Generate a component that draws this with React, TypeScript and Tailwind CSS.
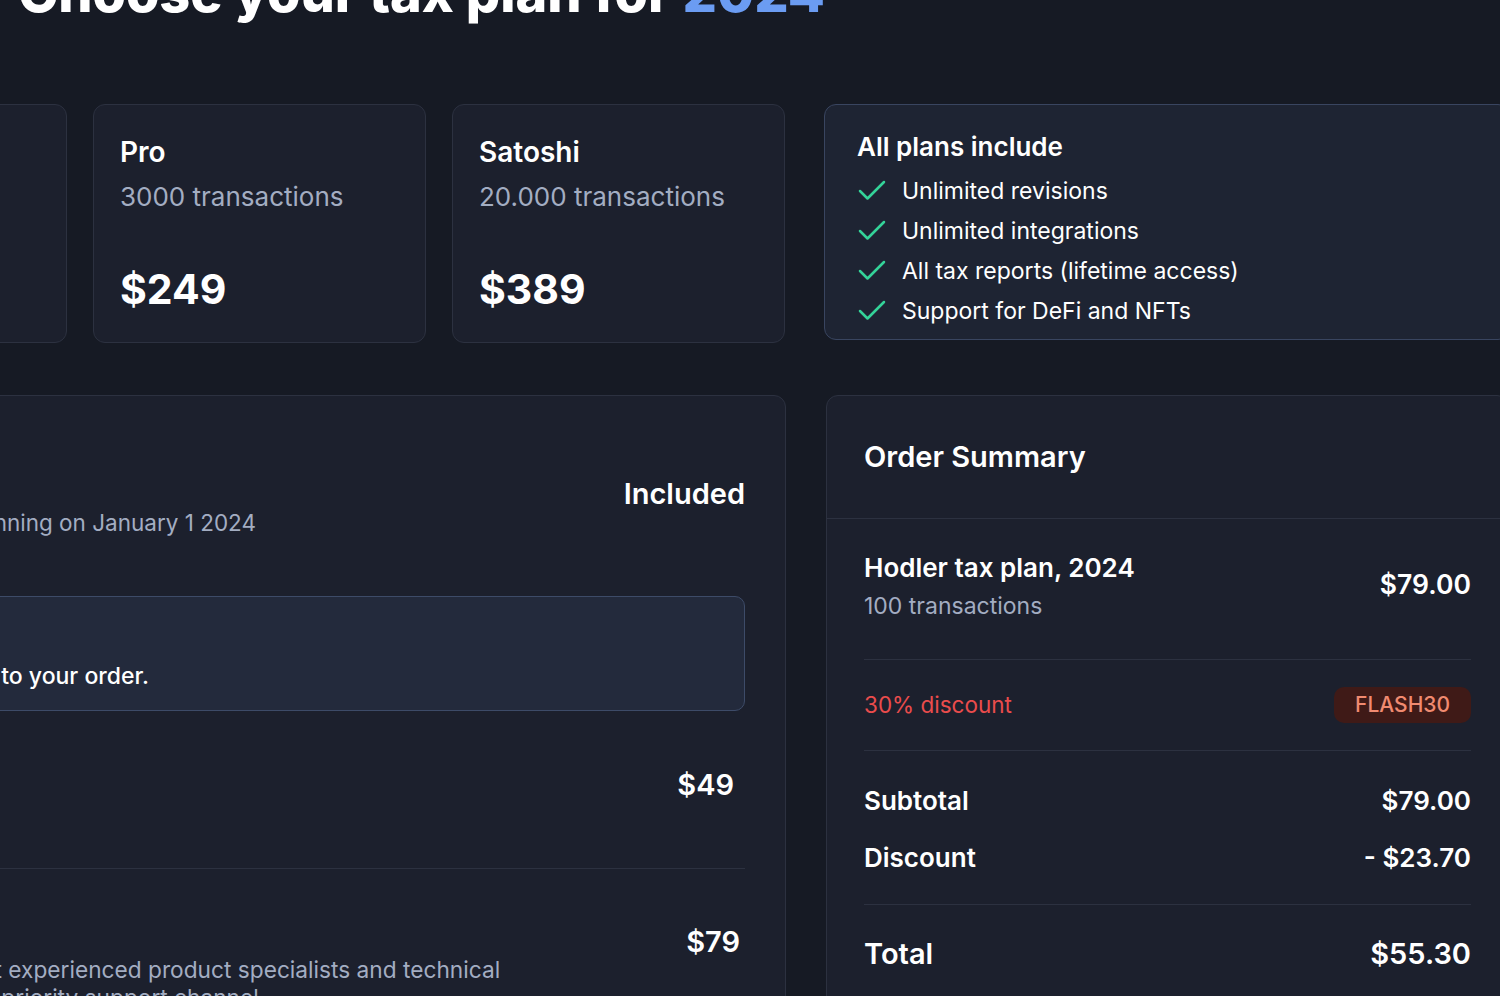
import { Check } from "lucide-react";

type Plan = { name: string; limit: string; price: string };

const plans: Plan[] = [
  { name: "Hodler", limit: "100 transactions", price: "$79" },
  { name: "Pro", limit: "3000 transactions", price: "$249" },
  { name: "Satoshi", limit: "20.000 transactions", price: "$389" },
];

const features = [
  "Unlimited revisions",
  "Unlimited integrations",
  "All tax reports (lifetime access)",
  "Support for DeFi and NFTs",
];

function PlanCard({ plan }: { plan: Plan }) {
  return (
    <div className="flex h-[239px] flex-col rounded-xl border border-[#2c3140] bg-[#1c202d] px-[26px] pt-[30px]">
      <h3 className="text-[28px] leading-[34px] font-semibold text-white">{plan.name}</h3>
      <p className="mt-[12px] text-[26px] leading-[32px] text-[#a3adc2]">{plan.limit}</p>
      <p className="mt-[51px] text-[41px] leading-[50px] font-bold text-white">{plan.price}</p>
    </div>
  );
}

function SummaryRow({ label, value, big }: { label: string; value: string; big?: boolean }) {
  const cls = big
    ? "text-[29px] leading-[36px] font-semibold text-white"
    : "text-[26px] leading-[32px] font-semibold text-white";
  return (
    <div className="flex items-center justify-between">
      <span className={cls}>{label}</span>
      <span className={cls}>{value}</span>
    </div>
  );
}

export default function App() {
  return (
    <div className="h-[996px] w-[1500px] overflow-hidden bg-[#161a24] font-['Inter',sans-serif] antialiased">
      <div className="ml-[-266px] w-[1800px]">
        <h1 className="mt-[-34px] pl-[284px] text-[54px] leading-[54px] font-extrabold text-white">
          Choose your tax plan for <span className="text-[#6b9cf2]">2024</span>
        </h1>

        <div className="mt-[84px] flex items-start gap-[39px]">
          <div className="grid w-[1051px] grid-cols-3 gap-[26px]">
            {plans.map((p) => (
              <PlanCard key={p.name} plan={p} />
            ))}
          </div>
          <div className="h-[236px] w-[686px] rounded-xl border border-[#394560] bg-[#1e2433] px-[32px] pt-[26px]">
            <h3 className="text-[26px] leading-[32px] font-semibold text-white">All plans include</h3>
            <ul className="mt-[8px] ml-[-3px] flex flex-col">
              {features.map((f) => (
                <li key={f} className="flex h-[40px] items-center gap-[12px]">
                  <Check className="h-[36px] w-[36px] shrink-0 text-[#34d399]" strokeWidth={1.7} />
                  <span className="text-[23px] text-white">{f}</span>
                </li>
              ))}
            </ul>
          </div>
        </div>

        <div className="mt-[52px] flex items-start gap-[40px]">
          {/* plan details + add-ons */}
          <div className="h-[700px] w-[1052px] rounded-xl border border-[#2c3140] bg-[#1c202d] px-[40px] pt-[80px]">
            <div className="flex items-start justify-between">
              <div>
                <h3 className="text-[28px] leading-[36px] font-semibold text-white">Hodler tax plan</h3>
                <p className="mt-[-3px] text-[22.5px] leading-[28px] text-[#a3adc2]">
                  For the tax year beginning on January 1 2024
                </p>
              </div>
              <span className="text-[29px] leading-[36px] font-semibold text-white">Included</span>
            </div>

            <div className="mt-[59px] h-[115px] rounded-[10px] border border-[#3d4b68] bg-[#232a3c] pt-[20px] pr-[26px] pl-[13px]">
              <p className="text-[24px] leading-[32px] font-semibold text-white">Add-ons</p>
              <p className="mt-[12px] text-[23px] leading-[30px] font-medium text-white">
                Add extra services to your order.
              </p>
            </div>

            <div className="flex h-[158px] items-start justify-between border-b border-[#2c3140] pt-[57px] pr-[11px]">
              <p className="text-[26px] leading-[34px] font-semibold text-white">Tax report review</p>
              <span className="text-[29px] leading-[34px] font-semibold text-white">$49</span>
            </div>

            <div className="flex items-start justify-between pt-[56px] pr-[5px]">
              <div>
                <p className="text-[26px] leading-[34px] font-semibold text-white">Expert support</p>
                <p className="mt-[-3px] ml-[8px] w-[760px] text-[22.7px] leading-[28px] text-[#a3adc2]">
                  Connect to our most experienced product specialists and technical experts
                  through our priority support channel.
                </p>
              </div>
              <span className="text-[29px] leading-[34px] font-semibold text-white">$79</span>
            </div>
          </div>

          {/* order summary */}
          <div className="h-[700px] w-[683px] rounded-xl border border-[#2c3140] bg-[#1c202d]">
            <div className="flex h-[123px] items-center border-b border-[#2c3140] px-[37px]">
              <h2 className="text-[29px] font-semibold text-white">Order Summary</h2>
            </div>
            <div className="px-[37px]">
              <div className="flex h-[141px] items-start justify-between border-b border-[#2c3140] pt-[32px]">
                <div>
                  <p className="text-[26px] leading-[34px] font-semibold text-white">Hodler tax plan, 2024</p>
                  <p className="mt-[6px] text-[23px] leading-[30px] text-[#a3adc2]">100 transactions</p>
                </div>
                <span className="mt-[17px] text-[26.5px] leading-[32px] font-semibold text-white">$79.00</span>
              </div>
              <div className="flex h-[91px] items-center justify-between border-b border-[#2c3140]">
                <span className="text-[22.5px] text-[#ea4c4c]">30% discount</span>
                <span className="flex h-[36px] items-center rounded-[10px] bg-[#3f1a17] px-[21px] text-[21px] font-medium text-[#f08a70]">
                  FLASH30
                </span>
              </div>
              <div className="flex h-[154px] flex-col justify-center gap-[25px] border-b border-[#2c3140] pt-[4px]">
                <SummaryRow label="Subtotal" value="$79.00" />
                <SummaryRow label="Discount" value="- $23.70" />
              </div>
              <div className="pt-[31px]">
                <SummaryRow label="Total" value="$55.30" big />
              </div>
            </div>
          </div>
        </div>
      </div>
    </div>
  );
}
